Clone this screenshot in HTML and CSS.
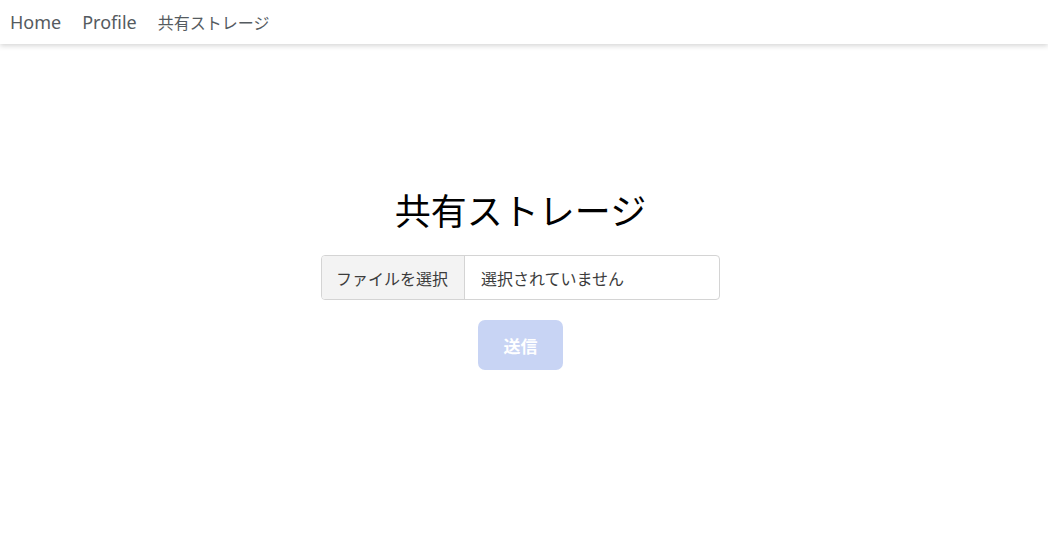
FILE: index.html
```html
<!DOCTYPE html>
<html lang="ja">
<head>
    <meta charset="UTF-8">
    <meta name="viewport" content="width=device-width, initial-scale=1.0">
    <title>共有ストレージ</title>
    <link rel="stylesheet" href="styles.css">
</head>
<body>
    <nav class="navbar">
        <a href="#" class="nav-link">Home</a>
        <a href="#" class="nav-link">Profile</a>
        <a href="#" class="nav-link nav-jp">共有ストレージ</a>
    </nav>

    <main class="storage">
        <h1>共有ストレージ</h1>
        <form class="upload-form">
            <label class="file-input">
                <span class="file-btn">ファイルを選択</span>
                <span class="file-name">選択されていません</span>
            </label>
            <button type="submit" class="btn" disabled>送信</button>
        </form>
    </main>
</body>
</html>
```

FILE: styles.css
```css
/* Basic Styles */
body {
    font-family: "Noto Sans", "Noto Sans CJK JP", sans-serif;
    color: #212529;
    background: #fff;
    margin: 0;
    padding: 0;
}

.navbar {
    display: flex;
    align-items: center;
    gap: 21px;
    height: 44px;
    padding: 0 10px;
    background: #fff;
    box-shadow: 0 2px 5px rgba(0, 0, 0, 0.16);
}

.nav-link {
    color: #555b60;
    text-decoration: none;
    font-size: 18px;
}

.nav-jp {
    font-size: 16px;
}

.storage {
    display: flex;
    flex-direction: column;
    align-items: center;
    padding-top: 140px;
    padding-right: 7px;
}

h1 {
    margin: 0 0 15px;
    font-size: 36px;
    font-weight: 400;
    line-height: 56px;
    color: #000;
}

.upload-form {
    display: flex;
    flex-direction: column;
    align-items: center;
    gap: 20px;
}

.file-input {
    display: flex;
    width: 397px;
    height: 43px;
    border: 1px solid #d4d4d4;
    border-radius: 4px;
    overflow: hidden;
    font-size: 16px;
    color: #3c3c3c;
}

.file-btn {
    display: flex;
    align-items: center;
    padding: 0 16px 0 14px;
    background: #f3f3f3;
    border-right: 1px solid #d4d4d4;
}

.file-name {
    display: flex;
    align-items: center;
    padding-left: 16px;
}

.btn {
    width: 85px;
    height: 50px;
    border: none;
    border-radius: 7px;
    background: #c8d4f4;
    color: #fff;
    font-family: inherit;
    font-size: 17px;
    font-weight: 700;
}
```
